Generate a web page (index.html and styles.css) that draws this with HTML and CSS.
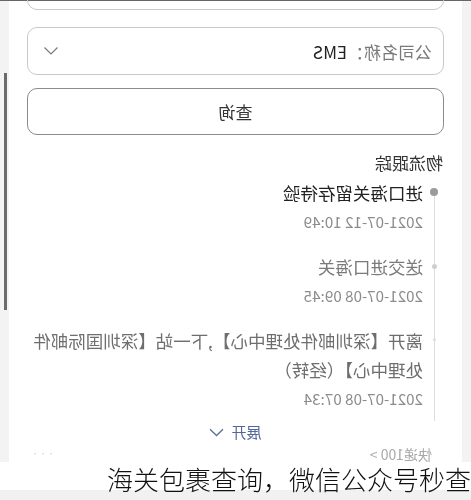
FILE: index.html
```html
<!DOCTYPE html>
<html lang="zh-CN">
<head>
  <meta charset="UTF-8">
  <title>海关包裹查询</title>
  <link rel="stylesheet" href="styles.css">
</head>
<body>
  <!-- schermafdruk staat gespiegeld -->
  <div class="screen">
    <div class="viewport">
      <div class="gutter"></div>
      <div class="card">
        <div class="field field-cut"></div>

        <div class="field select">
          <span class="label">公司名称：</span><span class="value">EMS</span>
          <svg class="chev" width="16" height="10" viewBox="0 0 16 10">
            <path d="M1.5 1.5 L8 8 L14.5 1.5" fill="none" stroke="#7a7a7a" stroke-width="1.2"/>
          </svg>
        </div>

        <button class="query" type="button">查询</button>

        <h2 class="section-title">物流跟踪</h2>
        <ul class="track">
          <li class="event current">
            <p class="event-text">进口海关留存待验</p>
            <p class="event-time">2021-07-12 10:49</p>
          </li>
          <li class="event">
            <p class="event-text">送交进口海关</p>
            <p class="event-time">2021-07-08 09:45</p>
          </li>
          <li class="event older">
            <p class="event-text">离开【深圳邮件处理中心】,下一站【深圳国际邮件处理中心】（经转）</p>
            <p class="event-time">2021-07-08 07:34</p>
          </li>
        </ul>

        <div class="expand">展开
          <svg width="15" height="9" viewBox="0 0 15 9">
            <path d="M1 1.2 L7.5 7.5 L14 1.2" fill="none" stroke="#5a6f9a" stroke-width="1.3"/>
          </svg>
        </div>

        <div class="card-foot">
          <span class="source">快递100 &gt;</span>
          <span class="more">•••</span>
        </div>
      </div>
      <div class="rail"><div class="scrollbar"></div></div>
    </div>
  </div>

  <div class="caption">海关包裹查询，微信公众号秒查</div>
</body>
</html>
```

FILE: styles.css
```css
body {
  margin: 0;
  width: 471px;
  height: 500px;
  overflow: hidden;
  position: relative;
  background-color: #ffffff;
  font-family: "Noto Sans CJK SC", "Noto Sans", sans-serif;
  color: #333333;
}
.screen {
  height: 500px;
  transform: scaleX(-1);
  border-top: 1px solid #666666;
  box-sizing: border-box;
}
.viewport {
  display: flex;
  height: 461px;
}
.gutter {
  width: 9px;
  background-color: #f3f3f3;
}
.card {
  flex: 1;
  background-color: #ffffff;
  padding: 0 18px;
}
.rail {
  width: 9px;
  background-color: #f3f3f3;
  position: relative;
}
.scrollbar {
  position: absolute;
  left: 2px;
  top: 72px;
  width: 3px;
  height: 237px;
  background-color: #6b6b6b;
}

/* invoervelden */
.field {
  height: 48px;
  border: 1px solid #c9c9c9;
  border-radius: 10px;
  box-sizing: border-box;
}
.field-cut {
  margin-top: -39px;
}
.select {
  margin-top: 17px;
  display: flex;
  align-items: center;
  padding: 0 11px;
  font-size: 17px;
}
.select .label {
  color: #7a7a7a;
}
.select .value {
  color: #222222;
}
.select .chev {
  margin-left: auto;
  margin-right: 4px;
}
.query {
  display: block;
  width: 100%;
  height: 47px;
  margin-top: 13px;
  border: 1.5px solid #8c8c8c;
  border-radius: 10px;
  background-color: #ffffff;
  font-family: inherit;
  font-size: 17px;
  color: #333333;
}

/* tijdlijn */
.section-title {
  margin: 16px 0 0 1px;
  font-size: 17px;
  font-weight: normal;
  line-height: 24px;
  color: #333333;
}
.track {
  list-style: none;
  margin: 3px 0 0 0;
  padding: 0;
  position: relative;
}
.track::before {
  content: "";
  position: absolute;
  left: 9px;
  top: 14px;
  bottom: 8px;
  width: 1px;
  background-color: #dddddd;
}
.event {
  position: relative;
  padding: 0 0 16px 21px;
}
.event::before {
  content: "";
  position: absolute;
  left: 7px;
  top: 12px;
  width: 5px;
  height: 5px;
  border-radius: 50%;
  background-color: #cfcfcf;
}
.event.current::before {
  left: 6px;
  top: 10px;
  width: 8px;
  height: 8px;
  background-color: #9b9b9b;
}
.event.older::before {
  left: 8px;
  width: 3px;
  height: 3px;
  background-color: #dddddd;
}
.event-text {
  margin: 0;
  font-size: 17.5px;
  line-height: 29px;
  color: #7a7a7a;
}
.current .event-text {
  color: #222222;
}
.older .event-text {
  color: #6e6e6e;
}
.event-time {
  margin: 0;
  font-size: 15.2px;
  line-height: 29px;
  color: #8c8c8c;
}

.expand {
  margin-top: -9px;
  display: flex;
  align-items: center;
  justify-content: center;
  gap: 7px;
  font-size: 15px;
  line-height: 24px;
  color: #52679a;
}
.card-foot {
  display: flex;
  justify-content: space-between;
  align-items: center;
  margin-top: 0;
  padding: 0 3px 0 12px;
  font-size: 14px;
  line-height: 20px;
  color: #a8a8a8;
}
.card-foot .more {
  font-size: 6px;
  letter-spacing: 2px;
  color: #bbbbbb;
}

/* bijschrift onderaan */
.caption {
  position: absolute;
  left: 0;
  right: 0;
  top: 463px;
  height: 37px;
  text-align: right;
  font-size: 26px;
  font-weight: 300;
  line-height: 31px;
  color: #111111;
  background: linear-gradient(#ffffff 0 27px, #f1f1f1 27px);
}
```
